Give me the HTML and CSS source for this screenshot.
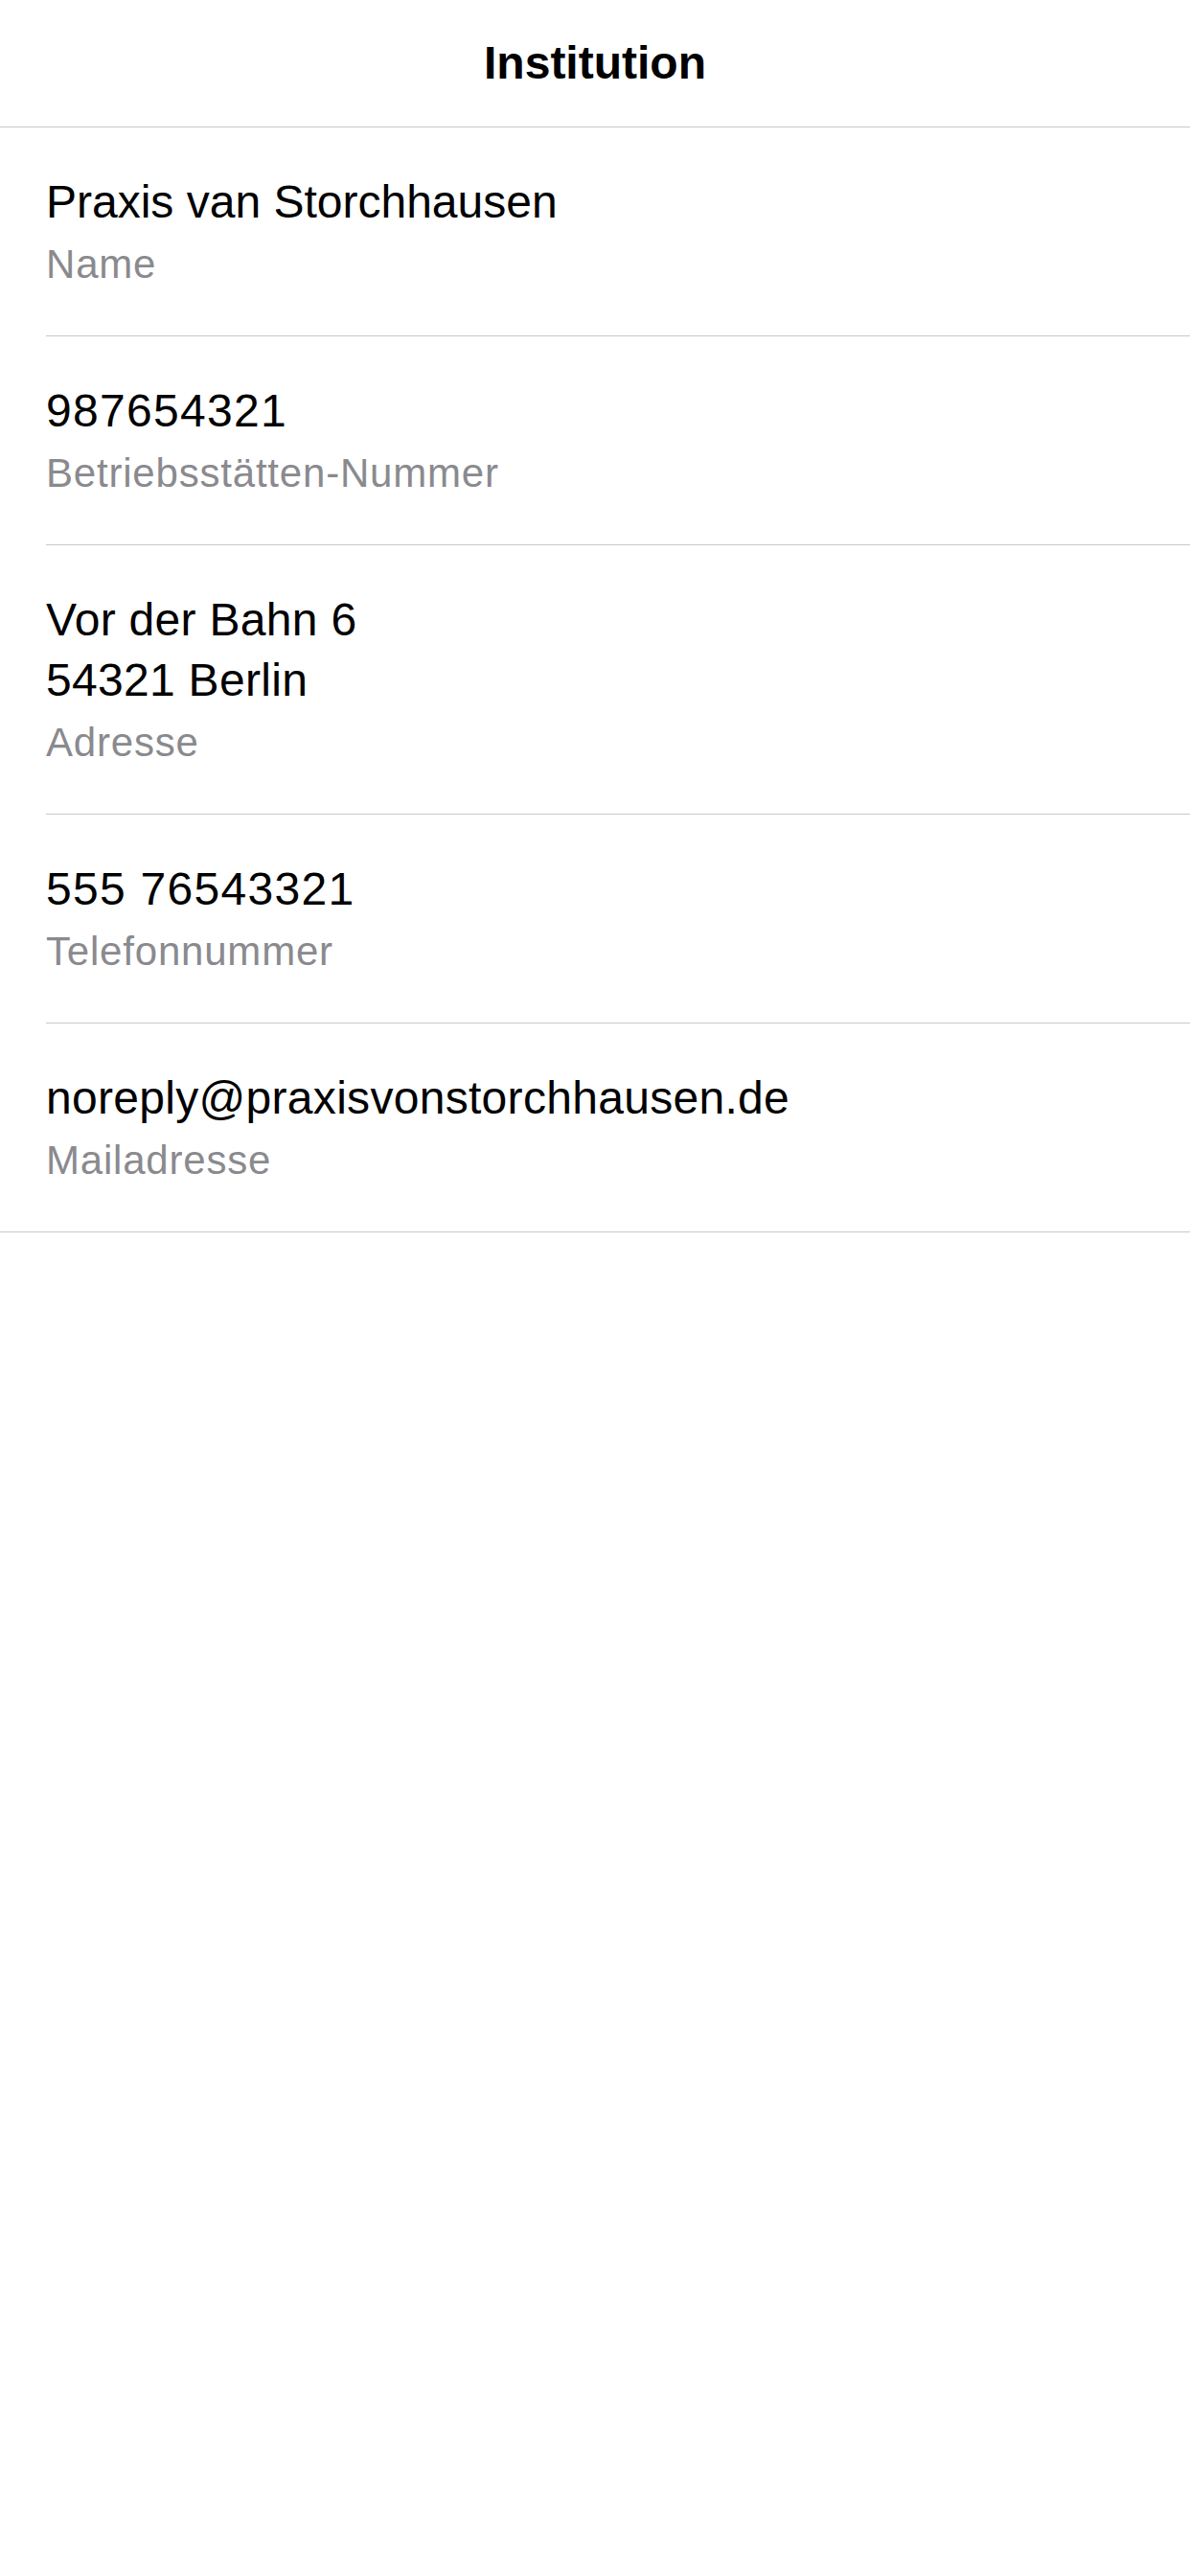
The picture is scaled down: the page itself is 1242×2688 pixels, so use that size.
FILE: index.html
```html
<!DOCTYPE html>
<html lang="de">
<head>
<meta charset="utf-8">
<title>Institution</title>
<link rel="stylesheet" href="styles.css">
</head>
<body>
<header class="navbar">
  <h1 class="nav-title">Institution</h1>
</header>
<main class="list">
  <div class="row">
    <div class="value">Praxis van Storchhausen</div>
    <div class="label">Name</div>
  </div>
  <div class="row">
    <div class="value value-num">987654321</div>
    <div class="label">Betriebsstätten-Nummer</div>
  </div>
  <div class="row">
    <div class="value value-addr">Vor der Bahn 6<br>54321 Berlin</div>
    <div class="label">Adresse</div>
  </div>
  <div class="row">
    <div class="value value-num">555 76543321</div>
    <div class="label">Telefonnummer</div>
  </div>
  <div class="row row-last">
    <div class="value value-mail">noreply@praxisvonstorchhausen.de</div>
    <div class="label">Mailadresse</div>
  </div>
</main>
</body>
</html>
```
FILE: styles.css
```css
html, body {
  margin: 0;
  padding: 0;
  background: #ffffff;
}
body {
  font-family: "Liberation Sans", Arial, sans-serif;
  color: #000000;
  width: 1242px;
  min-height: 2688px;
}
.navbar {
  height: 132px;
  border-bottom: 1px solid #c8c7cc;
  display: flex;
  align-items: center;
  justify-content: center;
}
.nav-title {
  margin: 0;
  font-size: 48px;
  font-weight: 700;
  line-height: 132px;
  color: #000;
}
.list {
  display: flex;
  flex-direction: column;
}
.row {
  margin-left: 48px;
  padding: 46px 0 41px 0;
  border-bottom: 1px solid #c8c7cc;
  display: flex;
  flex-direction: column;
}
.row-last {
  margin-left: 0;
  padding-left: 48px;
}
.value {
  font-size: 48px;
  line-height: 63px;
  color: #000;
}
.value-num {
  letter-spacing: 1.3px;
}
.value-addr {
  letter-spacing: 0.3px;
}
.value-mail {
  letter-spacing: 0.3px;
}
.label {
  font-size: 42px;
  line-height: 67px;
  color: #8a8a8e;
  letter-spacing: 0.8px;
}
```
